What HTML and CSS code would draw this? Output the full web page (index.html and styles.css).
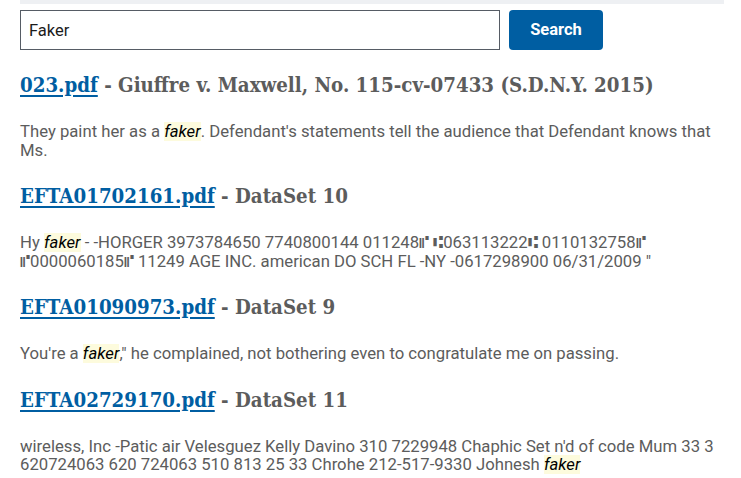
FILE: index.html
```html
<!DOCTYPE html>
<html lang="en">
<head>
<meta charset="utf-8">
<title>Search</title>
<link rel="stylesheet" href="styles.css">
</head>
<body>
<div class="topbar"></div>
<form class="search" onsubmit="return false">
  <input class="search-input" type="text" value="Faker">
  <button class="search-btn" type="submit">Search</button>
</form>
<main class="results">
  <section class="result">
    <h2 class="result-title"><a href="#">023.pdf</a> - Giuffre v. Maxwell, No. 115-cv-07433 (S.D.N.Y. 2015)</h2>
    <p class="snippet">They paint her as a <mark>faker</mark>. Defendant's statements tell the audience that Defendant knows that Ms.</p>
  </section>
  <section class="result">
    <h2 class="result-title"><a href="#">EFTA01702161.pdf</a> - DataSet 10</h2>
    <p class="snippet">Hy <mark>faker</mark> - -HORGER 3973784650 7740800144 011248&#x2448; &#x2446;063113222&#x2446; 0110132758&#x2448; &#x2448;0000060185&#x2448; 11249 AGE INC. american DO SCH FL -NY -0617298900 06/31/2009 "</p>
  </section>
  <section class="result">
    <h2 class="result-title"><a href="#">EFTA01090973.pdf</a> - DataSet 9</h2>
    <p class="snippet">You're a <mark>faker</mark>," he complained, not bothering even to congratulate me on passing.</p>
  </section>
  <section class="result">
    <h2 class="result-title"><a href="#">EFTA02729170.pdf</a> - DataSet 11</h2>
    <p class="snippet">wireless, Inc -Patic air Velesguez Kelly Davino 310 7229948 Chaphic Set n'd of code Mum 33 3 620724063 620 724063 510 813 25 33 Chrohe 212-517-9330 Johnesh <mark>faker</mark></p>
  </section>
</main>
</body>
</html>
```

FILE: styles.css
```css
html, body {
  margin: 0;
  padding: 0;
  background: #ffffff;
}

body {
  font-family: Roboto, "Liberation Sans", sans-serif;
  color: #5c5c5c;
}

.topbar {
  height: 4px;
  margin: 0 17px 0 20px;
  background: #eef0f3;
}

.search {
  display: flex;
  gap: 9px;
  margin: 6px 0 0 20px;
}

.search-input {
  box-sizing: border-box;
  width: 480px;
  height: 40px;
  margin: 0;
  padding: 0 8px;
  border: 1px solid #565c65;
  border-radius: 0;
  font-family: Roboto, "Liberation Sans", sans-serif;
  font-size: 16.5px;
  color: #1b1b1b;
  outline: none;
}

.search-btn {
  box-sizing: border-box;
  width: 94px;
  height: 40px;
  margin: 0;
  padding: 0 0 2px;
  border: none;
  border-radius: 4px;
  background: #005ea2;
  color: #ffffff;
  font-family: Roboto, "Liberation Sans", sans-serif;
  font-size: 16.5px;
  font-weight: 700;
}

.results {
  padding: 0 20px;
}

.result-title {
  margin: 22px 0 0;
  font-family: "DejaVu Serif Condensed", "DejaVu Serif", serif;
  font-size: 20.3px;
  font-weight: 700;
  line-height: 28px;
  color: #5c5c5c;
}

.result:first-child .result-title {
  margin-top: 21px;
}

.result-title a {
  color: #005ea2;
  text-decoration: underline;
  text-decoration-thickness: 2px;
  text-underline-offset: 3px;
}

.snippet {
  margin: 24px 0 0;
  font-size: 16.7px;
  line-height: 18.5px;
}

mark {
  background: #fdfbdd;
  color: #000000;
  font-style: italic;
}
```
